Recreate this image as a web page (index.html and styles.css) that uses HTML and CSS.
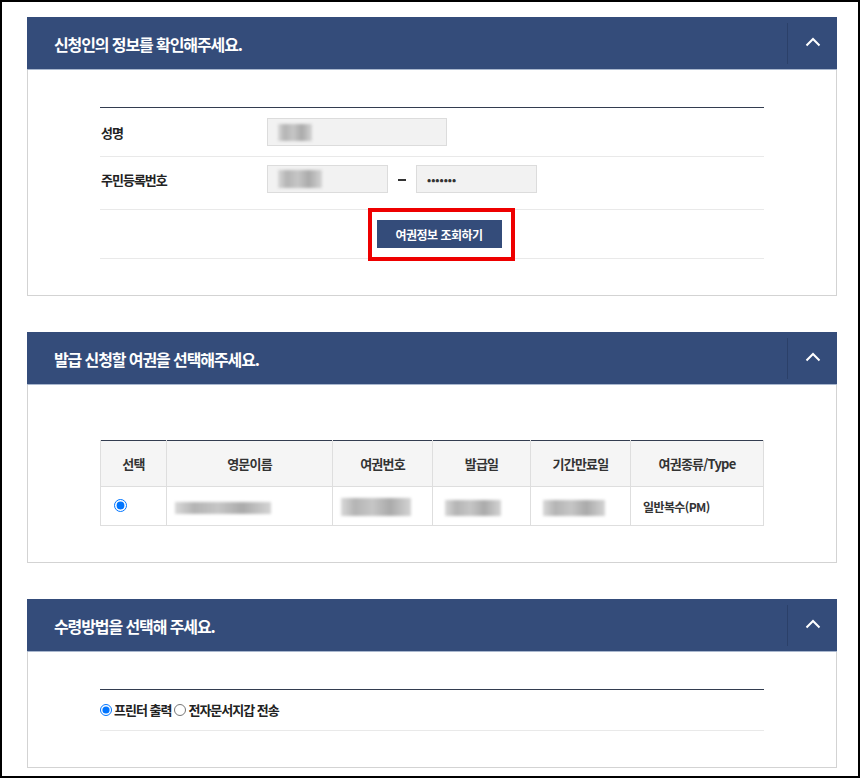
FILE: index.html
```html
<!DOCTYPE html>
<html lang="ko">
<head>
    <meta charset="UTF-8">
    <meta name="viewport" content="width=device-width, initial-scale=1.0">
    <title>여권 발급 신청</title>
    <link rel="stylesheet" href="styles.css">
</head>
<body>
    <div class="frame">
        <!-- 신청인 정보 -->
        <section class="panel">
            <div class="panel-head">
                <h2 class="panel-title">신청인의 정보를 확인해주세요.</h2>
                <button class="toggle" type="button">
                    <svg width="16" height="10" viewBox="0 0 16 10"><polyline points="1.5,8.5 8,2 14.5,8.5" fill="none" stroke="#fff" stroke-width="2"/></svg>
                </button>
            </div>
            <div class="panel-body">
                <div class="form">
                    <div class="form-row">
                        <div class="form-label">성명</div>
                        <div class="field field-name"><span class="blur blur-name"></span></div>
                    </div>
                    <div class="form-row form-row-id">
                        <div class="form-label">주민등록번호</div>
                        <div class="field field-short"><span class="blur blur-birth"></span></div>
                        <span class="dash"></span>
                        <div class="field field-short field-dots">•••••••</div>
                    </div>
                    <div class="form-row btn-row">
                        <span class="highlight">
                            <button class="btn-primary" type="button">여권정보 조회하기</button>
                        </span>
                    </div>
                </div>
            </div>
        </section>

        <!-- 여권 선택 -->
        <section class="panel">
            <div class="panel-head">
                <h2 class="panel-title">발급 신청할 여권을 선택해주세요.</h2>
                <button class="toggle" type="button">
                    <svg width="16" height="10" viewBox="0 0 16 10"><polyline points="1.5,8.5 8,2 14.5,8.5" fill="none" stroke="#fff" stroke-width="2"/></svg>
                </button>
            </div>
            <div class="panel-body panel-body-table">
                <table class="passport-table">
                    <colgroup>
                        <col style="width: 66px">
                        <col style="width: 166px">
                        <col style="width: 100px">
                        <col style="width: 98px">
                        <col style="width: 100px">
                        <col style="width: 133px">
                    </colgroup>
                    <thead>
                        <tr>
                            <th>선택</th>
                            <th>영문이름</th>
                            <th>여권번호</th>
                            <th>발급일</th>
                            <th>기간만료일</th>
                            <th>여권종류/Type</th>
                        </tr>
                    </thead>
                    <tbody>
                        <tr>
                            <td class="cell-radio"><input type="radio" name="passport" checked></td>
                            <td><span class="blur blur-eng"></span></td>
                            <td><span class="blur blur-no"></span></td>
                            <td class="cell-date"><span class="blur blur-date"></span></td>
                            <td class="cell-date"><span class="blur blur-exp"></span></td>
                            <td class="cell-type">일반복수(PM)</td>
                        </tr>
                    </tbody>
                </table>
            </div>
        </section>

        <!-- 수령방법 -->
        <section class="panel">
            <div class="panel-head">
                <h2 class="panel-title">수령방법을 선택해 주세요.</h2>
                <button class="toggle" type="button">
                    <svg width="16" height="10" viewBox="0 0 16 10"><polyline points="1.5,8.5 8,2 14.5,8.5" fill="none" stroke="#fff" stroke-width="2"/></svg>
                </button>
            </div>
            <div class="panel-body">
                <div class="form">
                    <div class="form-row radio-row">
                        <label class="radio"><input type="radio" name="receive" checked>프린터 출력</label>
                        <label class="radio"><input type="radio" name="receive">전자문서지갑 전송</label>
                    </div>
                </div>
            </div>
        </section>
    </div>
</body>
</html>
```

FILE: styles.css
```css
body {
    margin: 0;
    font-family: "Noto Sans CJK KR", "Noto Sans", sans-serif;
    color: #222;
    background-color: #fff;
}

.frame {
    width: 860px;
    height: 778px;
    box-sizing: border-box;
    border: 2px solid #000;
    padding: 15px 21px 0 25px;
    overflow: hidden;
}

.panel {
    margin-bottom: 36px;
}

.panel-head {
    display: flex;
    align-items: center;
    height: 52px;
    padding-left: 27px;
    background-color: #344c7a;
    border-bottom: 1px solid #a9b7ce;
}

.panel-title {
    flex: 1;
    margin: 0;
    color: #fff;
    font-size: 16px;
    font-weight: 700;
    letter-spacing: -1.1px;
    padding-top: 2px;
}

.toggle {
    width: 50px;
    height: 41px;
    display: flex;
    align-items: center;
    justify-content: center;
    background: none;
    border: none;
    border-left: 1px solid #2b4069;
    padding: 0 0 2px 0;
}

.panel-body {
    border: 1px solid #d3d3d3;
    border-top: none;
    padding: 37px 72px 36px;
}

.panel-body-table {
    padding-top: 55px;
    padding-bottom: 36px;
}

.form {
    border-top: 1px solid #333d50;
}

.form-row {
    display: flex;
    align-items: center;
    padding: 10px 0;
    border-bottom: 1px solid #e9e9e9;
    font-size: 13px;
}

.form-row-id {
    padding: 8px 0 16px;
}

.form-label {
    width: 166px;
    padding-left: 1px;
    font-weight: 700;
    letter-spacing: -1px;
}

.field {
    height: 28px;
    box-sizing: border-box;
    background-color: #f2f2f2;
    border: 1px solid #dcdcdc;
    display: flex;
    align-items: center;
    padding-left: 10px;
}

.field-name {
    width: 180px;
}

.field-short {
    width: 121px;
}

.field-dots {
    font-size: 11px;
    font-weight: 700;
    letter-spacing: 0;
    color: #333;
}

.dash {
    width: 28px;
    display: flex;
    justify-content: center;
}

.dash::before {
    content: "";
    width: 8px;
    height: 2px;
    background-color: #333;
    margin-top: 1px;
}

.btn-row {
    justify-content: center;
    padding: 10px 0 10px 14px;
}

.highlight {
    position: relative;
    display: inline-block;
}

.highlight::after {
    content: "";
    position: absolute;
    left: -9px;
    right: -13px;
    top: -12px;
    bottom: -13px;
    border: 4px solid #ee0000;
}

.btn-primary {
    display: block;
    width: 125px;
    height: 28px;
    border: none;
    background-color: #344c7a;
    color: #fff;
    font-family: "Noto Sans CJK KR", sans-serif;
    font-size: 12px;
    font-weight: 700;
    letter-spacing: -0.5px;
}

/* 흐림 처리된 개인정보 */
.blur {
    display: inline-block;
    height: 14px;
    background: linear-gradient(90deg, #d8d8d8 0%, #b4b4b4 20%, #c6c6c6 45%, #aaaaaa 70%, #d4d4d4 100%);
    filter: blur(1.5px);
    vertical-align: middle;
}

.blur-name {
    width: 34px;
    height: 17px;
}

.blur-birth {
    width: 44px;
    height: 18px;
}

.blur-eng {
    width: 96px;
    height: 12px;
}

.blur-no {
    width: 70px;
    height: 18px;
}

.blur-date {
    width: 56px;
    height: 16px;
}

.blur-exp {
    width: 62px;
    height: 16px;
}

.passport-table {
    width: 100%;
    border-collapse: collapse;
    table-layout: fixed;
    border-top: 1px solid #333d50;
    font-size: 13px;
}

.passport-table th {
    height: 43px;
    background-color: #f5f5f5;
    font-weight: 700;
    letter-spacing: -0.8px;
    border: 1px solid #dedede;
    border-top: none;
    color: #333;
}

.passport-table td {
    height: 38px;
    border: 1px solid #dedede;
    padding: 0 8px;
}

.cell-radio input {
    margin: 2px 0 0 5px;
}

.cell-date {
    padding-left: 12px !important;
}

.cell-type {
    font-size: 12px;
    font-weight: 700;
    letter-spacing: -0.6px;
    color: #333;
    padding-left: 12px !important;
}

.radio-row {
    padding: 10px 0 11px;
}

.radio {
    display: flex;
    align-items: center;
    font-weight: 700;
    letter-spacing: -1px;
    margin-right: 3px;
}

.radio input {
    margin: 0 2px 0 0;
    width: 12px;
    height: 12px;
}
```
